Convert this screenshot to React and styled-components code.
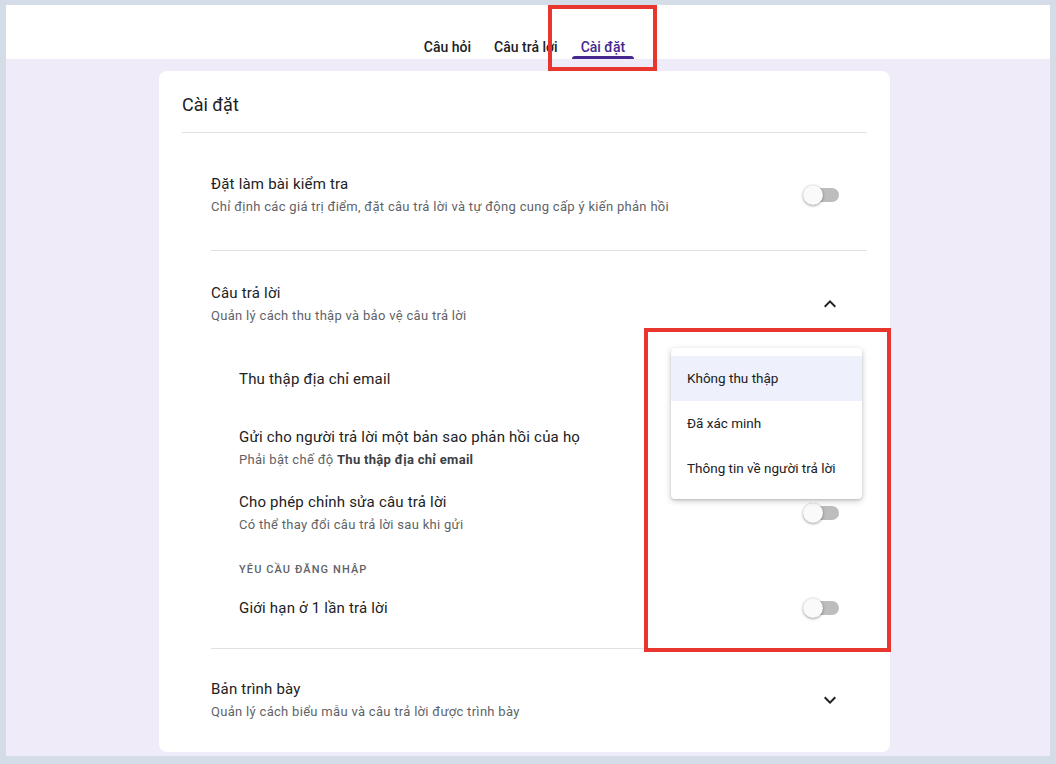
import React from "react";
import styled, { createGlobalStyle } from "styled-components";

const Global = createGlobalStyle`
  html, body { margin: 0; padding: 0; }
  body { font-family: Roboto, "Noto Sans", Arial, sans-serif; color: #202124; }
  * { box-sizing: border-box; }
`;

const Frame = styled.div`
  width: 1056px;
  height: 764px;
  padding: 5px 6px 8px 6px;
  background: #d4dce8;
  display: flex;
  flex-direction: column;
`;

const Header = styled.header`
  height: 54px;
  background: #ffffff;
  display: flex;
  justify-content: center;
  padding-right: 7px;
  flex-shrink: 0;
`;

const Tab = styled.div`
  position: relative;
  padding: 32px 11.5px 0;
  font-size: 14px;
  line-height: 20px;
  font-weight: 500;
  color: ${(p) => (p.$active ? "#45288f" : "#202124")};
`;

const TabLine = styled.span`
  position: absolute;
  left: 2.5px;
  right: 2.5px;
  bottom: 0;
  height: 3px;
  border-radius: 3px 3px 0 0;
  background: #45288f;
`;

const Highlight = styled.div`
  position: absolute;
  border: 4px solid #e8352e;
  z-index: 5;
  pointer-events: none;
`;

const TabHighlight = styled(Highlight)`
  left: -21.5px;
  right: -20.5px;
  top: 0;
  bottom: -12px;
`;

const Main = styled.main`
  flex: 1;
  background: #f0ebf8;
  padding: 12px 7px 0 0;
  display: flex;
  justify-content: center;
  align-items: flex-start;
`;

const Card = styled.section`
  position: relative;
  width: 731px;
  background: #ffffff;
  border-radius: 8px;
  padding: 22px 23px 30px;
`;

const CardTitle = styled.h1`
  margin: 0;
  font-size: 18px;
  line-height: 24px;
  font-weight: 400;
  color: #202124;
`;

const Divider = styled.div`
  height: 1px;
  background: #e0e0e0;
  margin-left: ${(p) => p.$indent || 0}px;
  margin-top: ${(p) => p.$top || 0}px;
`;

const Section = styled.div`
  margin-left: 29px;
  padding: ${(p) => p.$pad};
`;

const Row = styled.div`
  position: relative;
  display: flex;
  align-items: center;
  justify-content: space-between;
  padding-right: 25px;
  padding-left: ${(p) => p.$indent || 0}px;
  padding-top: ${(p) => p.$top || 0}px;
  min-height: ${(p) => (p.$minH ? p.$minH + "px" : "auto")};
`;

const TextBlock = styled.div`
  display: flex;
  flex-direction: column;
`;

const Title = styled.div`
  font-size: 15px;
  line-height: 24px;
  letter-spacing: 0.2px;
  color: #202124;
`;

const Sub = styled.div`
  margin-top: 1px;
  font-size: 13px;
  line-height: 20px;
  letter-spacing: 0.3px;
  color: #5f6368;
  b {
    font-weight: 700;
    color: #3c4043;
  }
`;

const Label = styled.div`
  padding: 27px 0 0 28px;
  font-size: 11px;
  line-height: 16px;
  font-weight: 500;
  letter-spacing: 1.1px;
  text-transform: uppercase;
  color: #5f6368;
`;

const SwitchBox = styled.div`
  position: relative;
  width: 36px;
  height: 20px;
  margin-right: 3px;
  flex-shrink: 0;
`;

const Track = styled.div`
  position: absolute;
  left: 3px;
  right: 0;
  top: 3px;
  height: 14px;
  border-radius: 7px;
  background: #bdbdbd;
`;

const Thumb = styled.div`
  position: absolute;
  left: 0;
  top: 0;
  width: 20px;
  height: 20px;
  border-radius: 50%;
  background: #fafafa;
  box-shadow: 0 1px 3px rgba(0, 0, 0, 0.35), 0 0 1px rgba(0, 0, 0, 0.2);
`;

const Chevron = styled.svg`
  width: 24px;
  height: 24px;
  flex-shrink: 0;
  fill: #202124;
`;

const SubList = styled.div`
  margin-top: 29px;
`;

const Menu = styled.ul`
  position: absolute;
  top: -7px;
  right: 5px;
  width: 191px;
  margin: 0;
  padding: 8px 0;
  list-style: none;
  background: #ffffff;
  border-radius: 4px;
  box-shadow: 0 2px 6px rgba(0, 0, 0, 0.22), 0 1px 2px rgba(0, 0, 0, 0.12);
  z-index: 4;
`;

const MenuItem = styled.li`
  height: 45px;
  display: flex;
  align-items: center;
  padding: 0 0 2px 16px;
  font-size: 13.5px;
  color: #202124;
  background: ${(p) => (p.$selected ? "#eef1fb" : "transparent")};
`;

const MenuHighlight = styled(Highlight)`
  left: 485px;
  top: 257px;
  width: 247px;
  height: 324px;
`;

const Switch = () => (
  <SwitchBox>
    <Track />
    <Thumb />
  </SwitchBox>
);

const ExpandLess = () => (
  <Chevron viewBox="0 0 24 24">
    <path d="M12 8l-6 6 1.41 1.41L12 10.83l4.59 4.58L18 14z" />
  </Chevron>
);

const ExpandMore = () => (
  <Chevron viewBox="0 0 24 24">
    <path d="M16.59 8.59L12 13.17 7.41 8.59 6 10l6 6 6-6z" />
  </Chevron>
);

export default function App() {
  return (
    <>
      <Global />
      <Frame>
        <Header>
          <Tab>Câu hỏi</Tab>
          <Tab>Câu trả lời</Tab>
          <Tab $active>
            Cài đặt
            <TabLine />
            <TabHighlight />
          </Tab>
        </Header>
        <Main>
          <Card>
            <CardTitle>Cài đặt</CardTitle>
            <Divider $top={15} />

            <Section $pad="39px 0 33px">
              <Row>
                <TextBlock>
                  <Title>Đặt làm bài kiểm tra</Title>
                  <Sub>Chỉ định các giá trị điểm, đặt câu trả lời và tự động cung cấp ý kiến phản hồi</Sub>
                </TextBlock>
                <Switch />
              </Row>
            </Section>
            <Divider $indent={29} />

            <Section $pad="30px 0 28px">
              <Row>
                <TextBlock>
                  <Title>Câu trả lời</Title>
                  <Sub>Quản lý cách thu thập và bảo vệ câu trả lời</Sub>
                </TextBlock>
                <ExpandLess />
              </Row>
              <SubList>
                <Row $indent={28} $minH={48}>
                  <Title>Thu thập địa chỉ email</Title>
                  <Menu>
                    <MenuItem $selected>Không thu thập</MenuItem>
                    <MenuItem>Đã xác minh</MenuItem>
                    <MenuItem>Thông tin về người trả lời</MenuItem>
                  </Menu>
                </Row>
                <Row $indent={28} $top={22}>
                  <TextBlock>
                    <Title>Gửi cho người trả lời một bản sao phản hồi của họ</Title>
                    <Sub>
                      Phải bật chế độ <b>Thu thập địa chỉ email</b>
                    </Sub>
                  </TextBlock>
                  <Switch />
                </Row>
                <Row $indent={28} $top={20}>
                  <TextBlock>
                    <Title>Cho phép chỉnh sửa câu trả lời</Title>
                    <Sub>Có thể thay đổi câu trả lời sau khi gửi</Sub>
                  </TextBlock>
                  <Switch />
                </Row>
                <Label>Yêu cầu đăng nhập</Label>
                <Row $indent={28} $top={18}>
                  <Title>Giới hạn ở 1 lần trả lời</Title>
                  <Switch />
                </Row>
              </SubList>
            </Section>
            <Divider $indent={29} />

            <Section $pad="28px 0 0">
              <Row>
                <TextBlock>
                  <Title>Bản trình bày</Title>
                  <Sub>Quản lý cách biểu mẫu và câu trả lời được trình bày</Sub>
                </TextBlock>
                <ExpandMore />
              </Row>
            </Section>

            <MenuHighlight />
          </Card>
        </Main>
      </Frame>
    </>
  );
}
